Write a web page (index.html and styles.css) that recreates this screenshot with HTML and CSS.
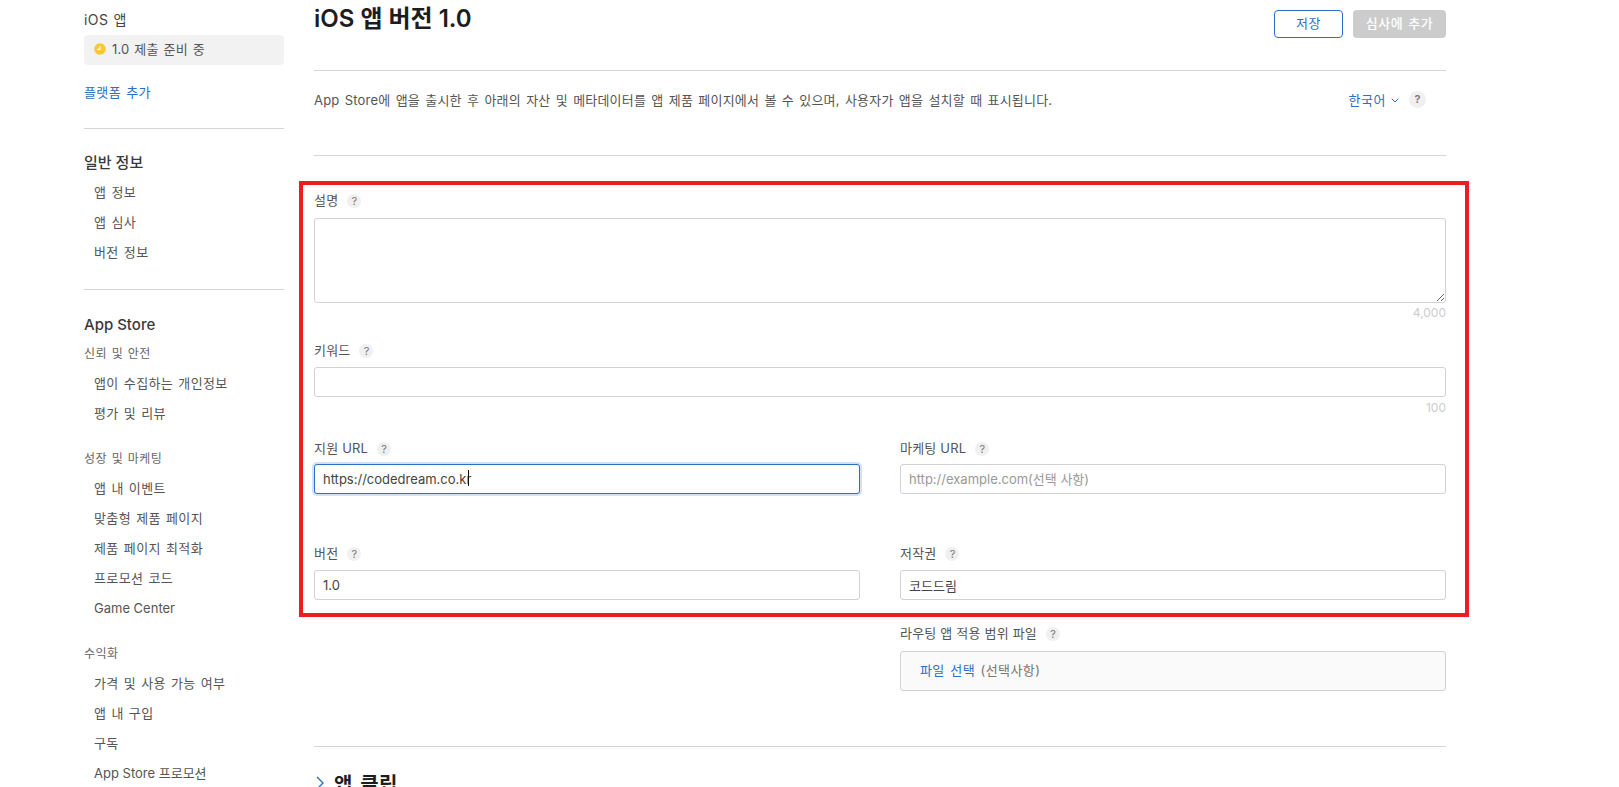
FILE: index.html
```html
<!DOCTYPE html>
<html lang="ko">
<head>
<meta charset="utf-8">
<title>iOS 앱 버전 1.0</title>
<link rel="stylesheet" href="styles.css">
</head>
<body>
<div class="page">
  <aside class="side">
    <div class="plat">iOS 앱</div>
    <div class="status"><span class="dot"><svg viewBox="0 0 12 12" width="12" height="12"><circle cx="6" cy="6" r="5.8" fill="#f7c92f"/><path d="M6 3v3.4H3.4" fill="none" stroke="#fff" stroke-width="1.1"/></svg></span>1.0 제출 준비 중</div>
    <a class="add">플랫폼 추가</a>
    <hr class="rule r1">
    <div class="head h1">일반 정보</div>
    <div class="item">앱 정보</div>
    <div class="item">앱 심사</div>
    <div class="item">버전 정보</div>
    <hr class="rule r2">
    <div class="head h2">App Store</div>
    <div class="sub s1">신뢰 및 안전</div>
    <div class="item">앱이 수집하는 개인정보</div>
    <div class="item">평가 및 리뷰</div>
    <div class="sub s2">성장 및 마케팅</div>
    <div class="item">앱 내 이벤트</div>
    <div class="item">맞춤형 제품 페이지</div>
    <div class="item">제품 페이지 최적화</div>
    <div class="item">프로모션 코드</div>
    <div class="item latin">Game Center</div>
    <div class="sub s2">수익화</div>
    <div class="item">가격 및 사용 가능 여부</div>
    <div class="item">앱 내 구입</div>
    <div class="item">구독</div>
    <div class="item latin">App Store 프로모션</div>
  </aside>
  <main class="main">
    <header class="top">
      <h1>iOS 앱 버전 1.0</h1>
      <div class="actions">
        <button class="btn save">저장</button>
        <button class="btn submit">심사에 추가</button>
      </div>
    </header>
    <div class="intro">
      <p>App Store에 앱을 출시한 후 아래의 자산 및 메타데이터를 앱 제품 페이지에서 볼 수 있으며, 사용자가 앱을 설치할 때 표시됩니다.</p>
      <div class="lang"><a>한국어</a><svg class="chev" viewBox="0 0 8 5" width="8" height="5"><path d="M.7.7 4 4 7.3.7" fill="none" stroke="#2b6fc9" stroke-width="1"/></svg><span class="help big">?</span></div>
    </div>
    <section class="form">
      <div class="field desc">
        <label>설명<span class="help">?</span></label>
        <textarea class="control area"></textarea>
        <div class="count">4,000</div>
      </div>
      <div class="field kw">
        <label>키워드<span class="help">?</span></label>
        <input class="control" type="text">
        <div class="count">100</div>
      </div>
      <div class="cols urls">
        <div class="field">
          <label>지원 URL<span class="help">?</span></label>
          <div class="wrap"><input class="control focus" type="text" value="https://codedream.co.kr"><span class="caret"></span></div>
        </div>
        <div class="field">
          <label>마케팅 URL<span class="help">?</span></label>
          <input class="control" type="text" placeholder="http://example.com(선택 사항)">
        </div>
      </div>
      <div class="cols vers">
        <div class="field">
          <label>버전<span class="help">?</span></label>
          <input class="control" type="text" value="1.0">
        </div>
        <div class="field">
          <label>저작권<span class="help">?</span></label>
          <input class="control" type="text" value="코드드림">
        </div>
      </div>
      <div class="cols route">
        <div></div>
        <div class="field">
          <label>라우팅 앱 적용 범위 파일<span class="help">?</span></label>
          <div class="file"><a>파일 선택</a> (선택사항)</div>
        </div>
      </div>
    </section>
    <hr class="rule r3">
    <div class="clips"><svg viewBox="0 0 8 14" width="8" height="14"><path d="M1 1l6 6-6 6" fill="none" stroke="#2b6fc9" stroke-width="1.4"/></svg><h2>앱 클립</h2></div>
  </main>
</div>
<div class="mark"></div>
</body>
</html>
```
FILE: styles.css
```css
* { box-sizing: border-box; }
html, body { margin: 0; height: 787px; overflow: hidden; background: #fff; }
body { font-family: Inter, "Noto Sans CJK KR", "Noto Sans", sans-serif; color: #444; font-size: 13px; position: relative; }
.page { display: flex; align-items: flex-start; padding-left: 84px; height: 787px; overflow: hidden; }
.side { width: 200px; flex: none; padding-top: 10px; word-spacing: 1px; letter-spacing: .4px; }
.plat { font-size: 14px; line-height: 20px; color: #444; }
.status { display: flex; align-items: center; gap: 6px; height: 30px; margin-top: 5px; padding: 0 0 3px 10px; background: #f2f2f2; border-radius: 4px; font-size: 13px; color: #555; letter-spacing: .2px; }
.dot { display: flex; }
.add { display: block; margin-top: 18px; line-height: 18px; color: #2b6fc9; font-size: 13px; }
.rule { border: 0; height: 1px; background: #d6d6d6; margin: 0; }
.r1 { margin-top: 27px; }
.head { font-size: 15px; font-weight: 500; line-height: 20px; color: #3a3a3a; letter-spacing: 0; word-spacing: 0; }
.h1 { margin-top: 24px; margin-bottom: 4px; }
.item { padding-left: 10px; height: 30px; line-height: 30px; font-size: 13px; color: #555; }
.latin { letter-spacing: 0; word-spacing: 0; }
.r2 { margin-top: 22px; }
.h2 { margin-top: 25px; margin-bottom: 9px; }
.sub { font-size: 12px; line-height: 20px; color: #666; }
.s1 { margin-bottom: 4px; }
.s2 { margin-top: 21px; margin-bottom: 4px; }
.main { width: 1132px; flex: none; margin-left: 30px; }
.top { display: flex; justify-content: space-between; align-items: flex-start; height: 71px; border-bottom: 1px solid #d6d6d6; }
h1 { margin: 3px 0 0; font-size: 24px; line-height: 32px; font-weight: 600; color: #1d1d1f; }
.actions { display: flex; gap: 10px; padding-top: 10px; }
.btn { height: 28px; border-radius: 4px; font: inherit; font-size: 13px; padding: 0 0 4px; letter-spacing: .5px; word-spacing: 1px; }
.save { width: 69px; background: #fff; border: 1px solid #2b6fc9; color: #2b6fc9; }
.submit { width: 93px; background: #ccc; border: 0; color: #fff; font-weight: 500; }
.intro { display: flex; justify-content: space-between; align-items: center; height: 85px; padding-bottom: 28px; border-bottom: 1px solid #d6d6d6; }
.intro p { margin: 0; font-size: 13px; color: #555; word-spacing: 1.4px; letter-spacing: .2px; }
.lang { display: flex; align-items: center; color: #2b6fc9; padding-right: 20px; letter-spacing: .5px; }
.chev { margin: 2px 0 0 5px; }
.help { display: inline-flex; align-items: center; justify-content: center; flex: none; width: 14px; height: 14px; margin: 3px 0 0 9px; border-radius: 50%; background: #f0f0f0; color: #777; font-size: 11px; font-weight: 400; letter-spacing: 0; }
.big { width: 17px; height: 17px; margin: 0 0 0 10px; font-size: 11px; font-weight: 600; }
.form { display: block; padding-top: 34px; }
.field label { display: flex; align-items: center; height: 20px; padding-bottom: 2px; font-size: 13px; color: #555; letter-spacing: .2px; }
.control { display: block; width: 100%; height: 30px; padding: 0 8px; border: 1px solid #d2d2d2; border-radius: 3px; font: inherit; font-size: 13px; color: #444; background: #fff; outline: 0; }
.control::placeholder { color: #999; }
.area { height: 85px; margin-top: 8px; resize: vertical; }
.count { height: 16px; margin-top: 2px; text-align: right; font-size: 12px; line-height: 16px; color: #ccc; }
.kw { margin-top: 19px; }
.kw .control { margin-top: 7px; }
.kw .count { margin-top: 3px; }
.cols { display: grid; grid-template-columns: 546px 546px; column-gap: 40px; }
.urls { margin-top: 22px; }
.urls .control { margin-top: 6px; }
.vers .control { margin-top: 7px; }
.focus { border-color: #2b6fc9; box-shadow: 0 0 0 2px #d3e2f6; }
.wrap { position: relative; }
.caret { position: absolute; left: 154px; top: 6px; width: 1px; height: 16px; background: #111; }
.vers { margin-top: 49px; }
.route { margin-top: 23px; }
.route .file { height: 40px; margin-top: 8px; padding-left: 19px; line-height: 36px; border: 1px solid #d2d2d2; border-radius: 3px; background: #fafafa; color: #777; font-size: 13px; word-spacing: 1.5px; letter-spacing: .4px; }
.file a { color: #2b6fc9; }
.r3 { margin-top: 55px; }
.clips { display: flex; align-items: center; gap: 10px; margin-top: 22px; height: 28px; padding-left: 2px; }
h2 { margin: 0; font-size: 20px; font-weight: 600; color: #1d1d1f; word-spacing: 2px; letter-spacing: .4px; }
.mark { position: absolute; left: 299px; top: 181px; width: 1170px; height: 436px; border: 4px solid #ee1c25; pointer-events: none; }
```
